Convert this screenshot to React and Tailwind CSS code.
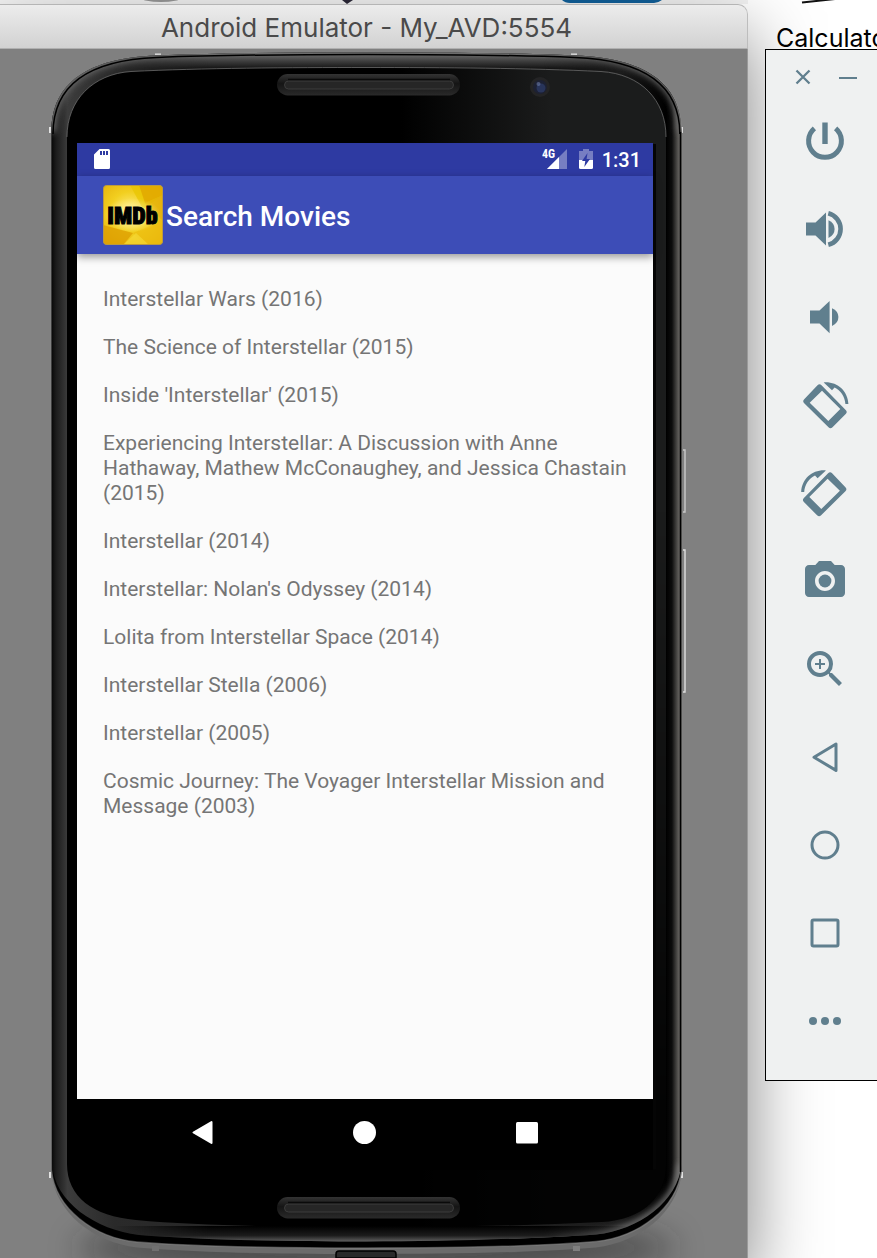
import React from "react";
import { MdCameraAlt, MdZoomIn } from "react-icons/md";

const movies = [
  "Interstellar Wars (2016)",
  "The Science of Interstellar (2015)",
  "Inside 'Interstellar' (2015)",
  "Experiencing Interstellar: A Discussion with Anne Hathaway, Mathew McConaughey, and Jessica Chastain (2015)",
  "Interstellar (2014)",
  "Interstellar: Nolan's Odyssey (2014)",
  "Lolita from Interstellar Space (2014)",
  "Interstellar Stella (2006)",
  "Interstellar (2005)",
  "Cosmic Journey: The Voyager Interstellar Mission and Message (2003)",
];

function Glyph({ children }) {
  return (
    <svg viewBox="0 0 48 48" className="size-12" fill="currentColor" aria-hidden="true">
      {children}
    </svg>
  );
}

function RotateShape() {
  return (
    <>
      <path
        fillRule="evenodd"
        d="M16.5 4.2 L3.2 18.2 Q1.2 20.2 3.2 22.2 L27.5 46.3 Q29.5 48.3 31.5 46.3 L44.7 33 Q46.7 31 44.7 29 L20.5 4.2 Q18.5 2.2 16.5 4.2 Z M21 9.7 L39.3 28 L27.3 40 L8.7 21.7 Z"
      />
      <path d="M22.7 1.4 C36 0.4 46.8 9.5 47.4 23 H44.4 C43.9 15.5 39.6 9.3 33.6 6.4 L31 9.2 Z" />
    </>
  );
}

const tools = [
  {
    label: "Power",
    icon: (
      <Glyph>
        <path d="M13.4 11.4 A16.4 16.4 0 1 0 34.6 11.4" fill="none" stroke="currentColor" strokeWidth="5" />
        <rect x="21.3" y="5.5" width="5.4" height="21.5" />
      </Glyph>
    ),
  },
  {
    label: "Volume up",
    icon: (
      <Glyph>
        <path d="M5 17.5 H14.5 L25 7.5 V40.5 L14.5 30.5 H5 Z" />
        <path d="M27.5 15.2 Q33.6 18 33.6 24 Q33.6 30 27.5 33 Z" />
        <path d="M27.3 8.2 A16.3 16.3 0 0 1 27.3 39.8" fill="none" stroke="currentColor" strokeWidth="4.6" />
      </Glyph>
    ),
  },
  {
    label: "Volume down",
    icon: (
      <Glyph>
        <path d="M9 17.5 H18.5 L28.6 8 V40.2 L18.5 30.5 H9 Z" />
        <path d="M31 15.2 Q37.4 18 37.4 24 Q37.4 30 31 33 Z" />
      </Glyph>
    ),
  },
  { label: "Rotate left", icon: <Glyph><RotateShape /></Glyph> },
  {
    label: "Rotate right",
    icon: (
      <Glyph>
        <g transform="translate(47.6 0) scale(-1 1)">
          <RotateShape />
        </g>
      </Glyph>
    ),
  },
  { label: "Take screenshot", icon: <MdCameraAlt className="size-12" /> },
  { label: "Zoom", icon: <MdZoomIn className="size-12" /> },
  {
    label: "Back",
    icon: (
      <Glyph>
        <path d="M13 24.2 L35 11 V37.4 Z" fill="none" stroke="currentColor" strokeWidth="3" strokeLinejoin="round" />
      </Glyph>
    ),
  },
  {
    label: "Home",
    icon: (
      <Glyph>
        <circle cx="24" cy="24" r="13" fill="none" stroke="currentColor" strokeWidth="3" />
      </Glyph>
    ),
  },
  {
    label: "Overview",
    icon: (
      <Glyph>
        <rect x="11" y="11" width="26" height="26" rx="1.5" fill="none" stroke="currentColor" strokeWidth="3" />
      </Glyph>
    ),
  },
  {
    label: "More",
    icon: (
      <Glyph>
        <circle cx="12" cy="24" r="4" />
        <circle cx="24" cy="24" r="4" />
        <circle cx="36" cy="24" r="4" />
      </Glyph>
    ),
  },
];

const body =
  "M0.5 80 C0.5 30 38 6 105 3.5 C180 0.5 250 0.5 315 0.5 C380 0.5 450 0.5 525 3.5 C592 6 630.5 30 630.5 80";
const glass =
  "M16 85 C16 48 42 22 80 19.5 C150 16 240 15.5 315 15.5 C390 15.5 480 16 550 19.5 C590 22 615 48 615 85 V1112 C615 1145 592 1168 550 1170 C470 1174 390 1175 315 1175 C240 1175 150 1174 85 1168 C42 1164 16 1145 16 1112 Z";
const lowerRim =
  " V1122 C626 1160 590 1190 545 1195.5 C480 1201 390 1202 315 1202 C240 1202 150 1201 86 1195.5 C41 1190 5 1160 0.5 1122 Z";
const lowerBlack =
  " V1118 C626 1156 588 1185 545 1189.5 C480 1195 390 1196 315 1196 C240 1196 150 1195 86 1190 C43 1186 4 1156 0.5 1118 Z";
const lowerBezel =
  " V1112 C627 1150 588 1178 545 1182.5 C480 1187 390 1189.5 315 1189.5 C240 1189.5 150 1188 88 1183 C45 1178 3 1150 1 1112 Z";

function Slot({ y }) {
  return (
    <g>
      <rect x="226" y={y} width="183" height="21.5" rx="10.7" fill="url(#slot)" />
      <rect x="233.5" y={y + 7} width="169" height="8" rx="4" fill="#262626" stroke="#3c3c3c" strokeWidth="1" />
      <path d={`M237 ${y + 5.5} H399`} stroke="#0a0a0a" strokeWidth="1.5" />
    </g>
  );
}

function PhoneFrame() {
  return (
    <svg
      viewBox="0 0 631 1206"
      preserveAspectRatio="none"
      className="absolute inset-0 size-full overflow-visible"
      aria-hidden="true"
    >
      <defs>
        <linearGradient id="sides" x1="0" x2="631" y1="0" y2="0" gradientUnits="userSpaceOnUse">
          <stop offset="0" stopColor="#050505" />
          <stop offset="0.008" stopColor="#1c1c1c" />
          <stop offset="0.02" stopColor="#303030" />
          <stop offset="0.026" stopColor="#3c3c3c" />
          <stop offset="0.1" stopColor="#2a2a2a" />
          <stop offset="0.9" stopColor="#1c1c1c" />
          <stop offset="0.975" stopColor="#000" />
          <stop offset="0.984" stopColor="#0c0c0c" />
          <stop offset="0.994" stopColor="#5a5855" />
          <stop offset="1" stopColor="#6a6865" />
        </linearGradient>
        <linearGradient id="topEdge" x1="0" x2="0" y1="2" y2="17" gradientUnits="userSpaceOnUse">
          <stop offset="0" stopColor="#6c6c6c" />
          <stop offset="0.5" stopColor="#3c3c3c" />
          <stop offset="1" stopColor="#111" />
        </linearGradient>
        <linearGradient id="bottomEdge" x1="0" x2="0" y1="1174" y2="1190" gradientUnits="userSpaceOnUse">
          <stop offset="0" stopColor="#000" />
          <stop offset="0.6" stopColor="#1c1c1c" />
          <stop offset="1" stopColor="#666" />
        </linearGradient>
        <linearGradient id="edgeFade" x1="0" x2="631" y1="0" y2="0" gradientUnits="userSpaceOnUse">
          <stop offset="0.1" stopColor="#fff" stopOpacity="0" />
          <stop offset="0.25" stopColor="#fff" />
          <stop offset="0.78" stopColor="#fff" />
          <stop offset="0.92" stopColor="#fff" stopOpacity="0" />
        </linearGradient>
        <mask id="topMask" maskUnits="userSpaceOnUse" x="0" y="0" width="631" height="20">
          <rect width="631" height="20" fill="url(#edgeFade)" />
        </mask>
        <mask id="bottomMask" maskUnits="userSpaceOnUse" x="0" y="1160" width="631" height="46">
          <rect y="1160" width="631" height="46" fill="url(#edgeFade)" />
        </mask>
        <linearGradient id="sheen" x1="350" x2="500" y1="0" y2="0" gradientUnits="userSpaceOnUse">
          <stop offset="0" stopColor="#1b1c1c" stopOpacity="0" />
          <stop offset="1" stopColor="#1b1c1c" />
        </linearGradient>
        <linearGradient id="sheenDown" x1="0" x2="0" y1="0" y2="1120" gradientUnits="userSpaceOnUse">
          <stop offset="0.4" stopColor="#fff" />
          <stop offset="0.95" stopColor="#fff" stopOpacity="0.1" />
        </linearGradient>
        <mask id="sheenMask">
          <rect width="631" height="1206" fill="url(#sheenDown)" />
        </mask>
        <linearGradient id="slot" x1="0" x2="0" y1="0" y2="1">
          <stop offset="0" stopColor="#333" />
          <stop offset="0.45" stopColor="#151515" />
          <stop offset="1" stopColor="#2a2a2a" />
        </linearGradient>
        <clipPath id="bezelClip">
          <path d={body + lowerBezel} />
        </clipPath>
        <filter id="soft3" x="-10%" y="-10%" width="120%" height="120%">
          <feGaussianBlur stdDeviation="3" />
        </filter>
        <filter id="soft16" x="-30%" y="-100%" width="160%" height="300%">
          <feGaussianBlur stdDeviation="16" />
        </filter>
      </defs>

      <ellipse cx="325" cy="1196" rx="300" ry="28" fill="#222" opacity="0.55" filter="url(#soft16)" />

      <g fill="#e2e2e2">
        <rect x="104" y="1.5" width="6" height="2" />
        <rect x="520" y="1.5" width="6" height="2" />
        <rect x="-2" y="75" width="2" height="6" />
        <rect x="630" y="75" width="2" height="6" />
        <rect x="-2" y="1120" width="2" height="6" />
        <rect x="630" y="1120" width="2" height="6" />
      </g>
      <path d="M632 398 H634 V460 H632" fill="none" stroke="#c9c9c9" strokeWidth="1.4" />
      <path d="M632 498 H634 V640 H632" fill="none" stroke="#dedede" strokeWidth="1.4" />

      <path d={body + lowerRim} fill="#6b6b6b" />
      <path d={body + lowerBlack} fill="#000" stroke="#8a8a8a" strokeOpacity="0.5" strokeWidth="1.5" />
      <path d={body + lowerBezel} fill="url(#sides)" />
      <g clipPath="url(#bezelClip)">
        <path d={body} fill="none" stroke="#666" strokeWidth="9" filter="url(#soft3)" />
        <path
          d="M630 1112 C627 1150 588 1178 545 1182.5 C520 1185 490 1186 460 1187"
          fill="none"
          stroke="#777"
          strokeWidth="6"
          filter="url(#soft3)"
        />
        <g mask="url(#topMask)">
          <path d={body} fill="url(#topEdge)" />
        </g>
      </g>
      <path d={glass} fill="#000" />
      <path d={glass} fill="url(#sheen)" mask="url(#sheenMask)" />
      <g clipPath="url(#bezelClip)">
        <rect y="1174" width="631" height="16" fill="url(#bottomEdge)" mask="url(#bottomMask)" />
      </g>
      <path
        d="M16 85 C16 48 42 22 80 19.5 C150 16 240 15.5 315 15.5 C390 15.5 480 16 550 19.5 C590 22 615 48 615 85"
        fill="none"
        stroke="#777"
        strokeWidth="1"
        strokeOpacity="0.7"
      />
      <path d={body} fill="none" stroke="#000" strokeWidth="1.5" transform="translate(1.5 2) scale(0.995 1)" />
      <path d="M629.5 80 V1120" stroke="#000" strokeWidth="1.5" />
      <path d="M602 92 h3 V1117 h-3 Z" fill="#050505" />

      <Slot y={22} />
      <Slot y={1145} />
      <circle cx="489" cy="35" r="10" fill="#242425" />
      <circle cx="489" cy="35" r="7" fill="#1d2133" />
      <circle cx="490" cy="36" r="4.5" fill="#28345a" />
      <circle cx="487.5" cy="32" r="2" fill="#6b7ba8" opacity="0.6" />
      <rect x="101" y="1194" width="7" height="5" fill="#6f6f6f" />
      <rect x="522" y="1194" width="7" height="5" fill="#7f7f7f" />
      <path d="M285 1206 V1202 Q285 1199 288 1199 H342 Q345 1199 345 1202 V1206 Z" fill="#2a2a2a" stroke="#000" strokeWidth="1.5" />
    </svg>
  );
}

function MovieLogo() {
  return (
    <svg viewBox="0 0 60 60" className="size-[60px] shrink-0" role="img" aria-label="IMDb">
      <defs>
        <radialGradient id="gold" cx="0.45" cy="0.45" r="0.75">
          <stop offset="0" stopColor="#fff08a" />
          <stop offset="0.45" stopColor="#f2cf20" />
          <stop offset="1" stopColor="#e3aa06" />
        </radialGradient>
        <radialGradient id="glow">
          <stop offset="0" stopColor="#fff6b0" stopOpacity="0.9" />
          <stop offset="1" stopColor="#fff6b0" stopOpacity="0" />
        </radialGradient>
        <clipPath id="logoClip">
          <rect x="0.5" y="0.5" width="59" height="59" rx="3" />
        </clipPath>
      </defs>
      <g clipPath="url(#logoClip)">
        <rect width="60" height="60" fill="url(#gold)" />
        <path d="M27 0 H60 V10 L40 24 Z" fill="#e8c500" opacity="0.7" />
        <path d="M60 10 V0 H36 L42 18 Z" fill="#dfa300" opacity="0.7" />
        <path d="M60 10 V36 L42 18 Z" fill="#e2ab08" opacity="0.6" />
        <path d="M0 40 L30 48 L20 60 H0 Z" fill="#dc9c00" opacity="0.75" />
        <path d="M30 48 L60 36 V60 H42 Z" fill="#edbd10" opacity="0.7" />
        <path d="M20 60 L33 48 L46 60 Z" fill="#f7dc3a" opacity="0.6" />
        <ellipse cx="29" cy="30" rx="29" ry="17" fill="url(#glow)" />
      </g>
      <rect x="0.5" y="0.5" width="59" height="59" rx="3" fill="none" stroke="#bd9a3c" />
      <text
        x="29.500"
        y="39"
        textAnchor="middle"
        className="font-['Roboto_Condensed','Liberation_Sans_Narrow',Roboto,sans-serif] text-[24px] font-black"
        fill="#000"
        stroke="#000"
        strokeWidth="1"
      >
        IMDb
      </text>
    </svg>
  );
}

function StatusBar() {
  return (
    <div className="flex h-[33px] items-center bg-[#2e3aa2] pr-3 pl-4 text-white">
      <svg viewBox="0 0 18 22" className="h-[22px] w-[18px]" aria-hidden="true">
        <path
          fill="#fff"
          fillRule="evenodd"
          d="M6.5 0 H15.5 Q17 0 17 1.5 V18.5 Q17 20 15.5 20 H2.5 Q1 20 1 18.5 V5.5 Z M7 2 V6 H9 V2 Z M10 2 V6 H12 V2 Z M13 2 V6 H15 V2 Z"
        />
      </svg>
      <div className="ml-auto flex items-center">
        <svg viewBox="0 0 26 22" className="h-[22px] w-[26px]" aria-hidden="true">
          <text x="0" y="9" fill="#fff" className="font-['Roboto_Condensed',Roboto,sans-serif] text-[12px] font-bold">
            4G
          </text>
          <path d="M25 0 V20 H5 Z" fill="#fff" opacity="0.35" />
          <path d="M17 8 V20 H5 Z" fill="#fff" />
        </svg>
        <svg viewBox="0 0 14 22" className="ml-[11px] h-[22px] w-[14px]" aria-hidden="true">
          <path d="M4 0 H10 V2 H14 V11 H0 V2 H4 Z" fill="#fff" opacity="0.35" />
          <path d="M0 11 H14 V18.5 Q14 20 12.5 20 H1.5 Q0 20 0 18.5 Z" fill="#fff" />
          <path d="M8.500 4 L3 12 H6.3 L5.3 18 L11 10 H7.6 Z" fill="#2e3aa2" />
        </svg>
        <span className="ml-[9px] pt-0.5 text-[20px] leading-[31px] font-medium">1:31</span>
      </div>
    </div>
  );
}

function Phone() {
  return (
    <div className="relative flex-1 pt-[91px] pr-[29px] pb-[36px] pl-[26px]">
      <PhoneFrame />
      <main className="relative flex flex-col font-['Roboto',sans-serif]">
        <StatusBar />
        <header className="z-10 flex h-[78px] items-center gap-[3px] bg-[#3d4db7] px-[26px] shadow-[0_3px_8px_rgba(0,0,0,0.4)]">
          <MovieLogo />
          <h1 className="pt-1 text-[28px] leading-8 font-medium text-white">Search Movies</h1>
        </header>
        <ul className="flex min-h-[845px] flex-col gap-[23px] bg-[#fbfbfb] px-[26px] pt-[33px] text-[21px] leading-[25px] text-[#757575]">
          {movies.map((movie) => (
            <li key={movie}>{movie}</li>
          ))}
        </ul>
        <nav className="flex h-[71px] items-start justify-center gap-[114px] bg-black pt-[9px] text-white">
          <button type="button" aria-label="Back">
            <Glyph>
              <path d="M14.5 24.5 L32.5 14 V35 Z" stroke="#fff" strokeWidth="2" strokeLinejoin="round" />
            </Glyph>
          </button>
          <button type="button" aria-label="Home">
            <Glyph>
              <circle cx="23.5" cy="24.5" r="11.5" />
            </Glyph>
          </button>
          <button type="button" aria-label="Overview">
            <Glyph>
              <rect x="13" y="14" width="22" height="21.5" rx="1.5" />
            </Glyph>
          </button>
        </nav>
      </main>
    </div>
  );
}

export default function App() {
  return (
    <div className="flex min-h-screen overflow-hidden bg-white font-['Roboto',sans-serif]">
      <div className="flex flex-1 flex-col">
        <svg viewBox="0 0 748 4" preserveAspectRatio="xMinYMin slice" className="h-1 w-full bg-[#f3f3f3]" aria-hidden="true">
          <ellipse cx="161" cy="-2" rx="20" ry="4" fill="#999" />
          <path d="M342 0 H353 L347 4 Z" fill="#2b2838" />
          <path d="M562 0 H662 Q658 3 654 3 H570 Q565 3 562 0 Z" fill="#11619c" />
        </svg>
        <section className="flex flex-1 flex-col rounded-tr-[10px] shadow-[0_30px_72px_rgba(0,0,0,0.5)]">
          <h2 className="h-[45px] rounded-tr-[10px] border-t border-r border-b border-t-[#b5b5b5] border-r-[#bdbdbd] border-b-[#b0b0b0] bg-linear-to-b from-[#ececec] to-[#d2d2d2] pr-[14px] text-center font-['Inter',sans-serif] text-[26px] leading-[46px] text-[#4a4a4a]">
            Android Emulator - My_AVD:5554
          </h2>
          <div className="flex flex-1 overflow-hidden border-r border-[#9a9a9a] bg-[#808080] pt-[3px] pr-[65px] pl-[51px]">
            <Phone />
          </div>
        </section>
      </div>
      <aside className="z-10 w-[129px] shrink-0 pl-[17px]">
        <div className="h-[49px]">
          <svg viewBox="0 0 112 4" className="h-1 w-[112px]" aria-hidden="true">
            <path d="M37 2.5 L70 -1" stroke="#111" strokeWidth="2" />
          </svg>
          <p className="pl-[11px] font-['Inter',sans-serif] text-[25px] leading-[68px] whitespace-nowrap text-black">Calculator</p>
        </div>
        <div className="flex w-[119px] flex-col border border-black bg-[#eff1f1] pb-[15px] text-[#607f8e]">
          <div className="flex h-[47px] items-center gap-[21px] pt-[6px] pl-[25px]">
            <button type="button" aria-label="Close">
              <svg viewBox="0 0 24 24" className="size-6" stroke="currentColor" strokeWidth="2.3" aria-hidden="true">
                <path d="M5.5 5.5 L18.5 18.5 M18.5 5.5 L5.5 18.5" />
              </svg>
            </button>
            <button type="button" aria-label="Minimize">
              <svg viewBox="0 0 24 24" className="size-6" stroke="currentColor" strokeWidth="2" aria-hidden="true">
                <path d="M3 13 H21" />
              </svg>
            </button>
          </div>
          {tools.map((tool) => (
            <button key={tool.label} type="button" aria-label={tool.label} className="flex h-[88px] items-center justify-center">
              {tool.icon}
            </button>
          ))}
        </div>
      </aside>
    </div>
  );
}
